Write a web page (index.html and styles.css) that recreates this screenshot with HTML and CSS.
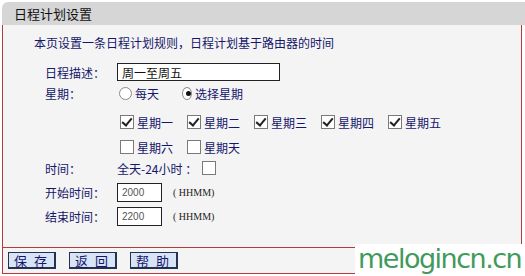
FILE: index.html
```html
<!DOCTYPE html>
<html lang="zh-CN">
<head>
    <meta charset="UTF-8">
    <title>日程计划设置</title>
    <link rel="stylesheet" href="styles.css">
</head>
<body>
    <div class="panel">
        <div class="title">日程计划设置</div>
        <div class="content">
            <p class="intro">本页设置一条日程计划规则，日程计划基于路由器的时间</p>
            <div class="form">
                <span class="label">日程描述：</span>
                <div class="field"><input class="text desc" type="text" value="周一至周五"></div>

                <span class="label">星期：</span>
                <div class="field">
                    <span class="opt radio-opt"><span class="radio"></span>每天</span>
                    <span class="opt radio-opt"><span class="radio on"></span>选择星期</span>
                </div>

                <span class="label"></span>
                <div class="field">
                    <span class="opt day"><span class="cb on"></span>星期一</span>
                    <span class="opt day"><span class="cb on"></span>星期二</span>
                    <span class="opt day"><span class="cb on"></span>星期三</span>
                    <span class="opt day"><span class="cb on"></span>星期四</span>
                    <span class="opt day"><span class="cb on"></span>星期五</span>
                </div>

                <span class="label"></span>
                <div class="field">
                    <span class="opt day"><span class="cb"></span>星期六</span>
                    <span class="opt day"><span class="cb"></span>星期天</span>
                </div>

                <span class="label">时间：</span>
                <div class="field">
                    <span class="allday">全天-24小时 ：</span><span class="cb"></span>
                </div>

                <span class="label">开始时间：</span>
                <div class="field"><input class="text time" type="text" value="2000"><span class="hint">( HHMM)</span></div>

                <span class="label">结束时间：</span>
                <div class="field"><input class="text time" type="text" value="2200"><span class="hint">( HHMM)</span></div>
            </div>
        </div>
        <div class="footer">
            <button class="btn">保 存</button>
            <button class="btn">返 回</button>
            <button class="btn">帮 助</button>
        </div>
    </div>
    <div class="mark">melogincn.cn</div>
</body>
</html>
```

FILE: styles.css
```css
body {
    margin: 0;
    padding: 0;
    background: #fff;
    font-family: "Noto Sans CJK SC", "Liberation Sans", sans-serif;
    font-size: 12px;
    color: #16166a;
    position: relative;
    height: 276px;
    overflow: hidden;
}

.panel {
    margin: 2px 0 0 2px;
    width: 523px;
}

.title {
    height: 23px;
    line-height: 23px;
    background: #d6d6d6;
    border-top-left-radius: 6px;
    padding-left: 12px;
    font-size: 13px;
    color: #111;
}

.content {
    width: 518px;
    height: 222px;
    background: #f4f4f4;
    border-left: 1px solid #b23b3b;
    border-right: 1px solid #b23b3b;
}

.intro {
    margin: 0;
    padding: 10px 0 0 31px;
    line-height: 16px;
}

.form {
    display: grid;
    grid-template-columns: 72px 1fr;
    grid-template-rows: 20px 22px 36px 14px 28px 20px 28px;
    align-items: center;
    margin: 11px 0 0 42px;
}

.field {
    display: flex;
    align-items: center;
    height: 100%;
}

.opt {
    display: flex;
    align-items: center;
    flex-shrink: 0;
    white-space: nowrap;
}

.radio-opt {
    width: 63px;
}

.day {
    width: 67px;
}

.radio {
    width: 11px;
    height: 11px;
    border: 1px solid #8a8a8a;
    border-radius: 50%;
    background: #fff;
    margin: 0 3px 0 2px;
    position: relative;
}

.radio.on::after {
    content: "";
    position: absolute;
    left: 3px;
    top: 3px;
    width: 5px;
    height: 5px;
    border-radius: 50%;
    background: #111;
}

.cb {
    width: 12px;
    height: 12px;
    border: 1px solid #7a7a7a;
    background: #fff;
    margin: 0 3px 0 3px;
    position: relative;
    flex-shrink: 0;
}

.cb.on::after {
    content: "";
    position: absolute;
    left: 3px;
    top: 0px;
    width: 4px;
    height: 8px;
    border-right: 2px solid #222;
    border-bottom: 2px solid #222;
    transform: rotate(40deg);
}

.allday {
    margin-right: 2px;
}

.text {
    box-sizing: border-box;
    border: 1px solid #222;
    background: #fff;
    padding: 0 4px;
    margin: 0;
    font-family: "Noto Sans CJK SC", "Liberation Sans", sans-serif;
    color: #111;
    outline: none;
}

.desc {
    width: 163px;
    height: 18px;
    font-size: 12px;
}

.time {
    width: 45px;
    height: 19px;
    font-size: 10px;
    color: #555;
    font-family: "Liberation Sans", sans-serif;
}

.hint {
    margin-left: 11px;
    font-family: "Liberation Serif", serif;
    font-size: 10px;
    color: #222;
}

.footer {
    width: 513px;
    height: 25px;
    background: #f4f4f4;
    border: 1px solid #b23b3b;
    display: flex;
    align-items: center;
    gap: 13px;
    padding-left: 5px;
}

.btn {
    width: 48px;
    height: 17px;
    padding: 0;
    background: #d7e4f6;
    border: 1px solid #24324f;
    border-right-width: 2px;
    border-bottom-width: 2px;
    font-family: "Noto Sans CJK SC", sans-serif;
    font-size: 13px;
    line-height: 13px;
    color: #16166a;
    letter-spacing: 2px;
}

.mark {
    position: absolute;
    left: 355px;
    top: 244px;
    width: 170px;
    height: 32px;
    background: #fff;
    color: #3f9a5c;
    font-family: "DejaVu Sans", sans-serif;
    font-size: 27px;
    line-height: 30px;
    letter-spacing: -1.5px;
    padding-left: 3px;
    box-sizing: border-box;
}
```
